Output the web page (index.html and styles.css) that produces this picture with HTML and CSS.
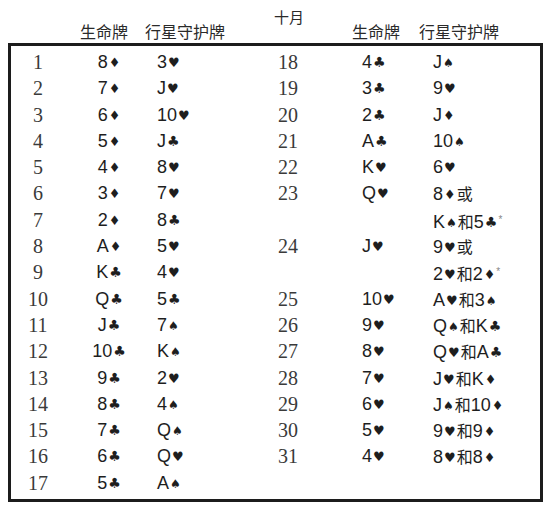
FILE: index.html
```html
<!DOCTYPE html>
<html lang="zh">
<head>
<meta charset="utf-8">
<title>十月</title>
<link rel="stylesheet" href="styles.css">
</head>
<body>
<div class="page">
  <div class="heads">
    <div></div>
    <div class="h h-life-l">生命牌</div>
    <div class="h h-planet-l">行星守护牌</div>
    <div class="h month">十月</div>
    <div class="h h-life-r">生命牌</div>
    <div class="h h-planet-r">行星守护牌</div>
  </div>
  <div class="box">
    <div class="n">1</div><div class="c cl">8<span class="s d">♦</span></div><div class="c pl">3<span class="s h2">♥</span></div>
    <div class="n nr">18</div><div class="c cr">4<span class="s cb">♣</span></div><div class="c pr">J<span class="s sp">♠</span></div>

    <div class="n">2</div><div class="c cl">7<span class="s d">♦</span></div><div class="c pl">J<span class="s h2">♥</span></div>
    <div class="n nr">19</div><div class="c cr">3<span class="s cb">♣</span></div><div class="c pr">9<span class="s h2">♥</span></div>

    <div class="n">3</div><div class="c cl">6<span class="s d">♦</span></div><div class="c pl">10<span class="s h2">♥</span></div>
    <div class="n nr">20</div><div class="c cr">2<span class="s cb">♣</span></div><div class="c pr">J<span class="s d">♦</span></div>

    <div class="n">4</div><div class="c cl">5<span class="s d">♦</span></div><div class="c pl">J<span class="s cb">♣</span></div>
    <div class="n nr">21</div><div class="c cr">A<span class="s cb">♣</span></div><div class="c pr">10<span class="s sp">♠</span></div>

    <div class="n">5</div><div class="c cl">4<span class="s d">♦</span></div><div class="c pl">8<span class="s h2">♥</span></div>
    <div class="n nr">22</div><div class="c cr">K<span class="s h2">♥</span></div><div class="c pr">6<span class="s h2">♥</span></div>

    <div class="n">6</div><div class="c cl">3<span class="s d">♦</span></div><div class="c pl">7<span class="s h2">♥</span></div>
    <div class="n nr">23</div><div class="c cr">Q<span class="s h2">♥</span></div><div class="c pr">8<span class="s d">♦</span><span class="cjk">或</span></div>

    <div class="n">7</div><div class="c cl">2<span class="s d">♦</span></div><div class="c pl">8<span class="s cb">♣</span></div>
    <div class="n nr"></div><div class="c cr"></div><div class="c pr">K<span class="s sp">♠</span><span class="cjk">和</span>5<span class="s cb">♣</span><span class="ast">*</span></div>

    <div class="n">8</div><div class="c cl">A<span class="s d">♦</span></div><div class="c pl">5<span class="s h2">♥</span></div>
    <div class="n nr">24</div><div class="c cr">J<span class="s h2">♥</span></div><div class="c pr">9<span class="s h2">♥</span><span class="cjk">或</span></div>

    <div class="n">9</div><div class="c cl">K<span class="s cb">♣</span></div><div class="c pl">4<span class="s h2">♥</span></div>
    <div class="n nr"></div><div class="c cr"></div><div class="c pr">2<span class="s h2">♥</span><span class="cjk">和</span>2<span class="s d">♦</span><span class="ast">*</span></div>

    <div class="n">10</div><div class="c cl">Q<span class="s cb">♣</span></div><div class="c pl">5<span class="s cb">♣</span></div>
    <div class="n nr">25</div><div class="c cr">10<span class="s h2">♥</span></div><div class="c pr">A<span class="s h2">♥</span><span class="cjk">和</span>3<span class="s sp">♠</span></div>

    <div class="n">11</div><div class="c cl">J<span class="s cb">♣</span></div><div class="c pl">7<span class="s sp">♠</span></div>
    <div class="n nr">26</div><div class="c cr">9<span class="s h2">♥</span></div><div class="c pr">Q<span class="s sp">♠</span><span class="cjk">和</span>K<span class="s cb">♣</span></div>

    <div class="n">12</div><div class="c cl">10<span class="s cb">♣</span></div><div class="c pl">K<span class="s sp">♠</span></div>
    <div class="n nr">27</div><div class="c cr">8<span class="s h2">♥</span></div><div class="c pr">Q<span class="s h2">♥</span><span class="cjk">和</span>A<span class="s cb">♣</span></div>

    <div class="n">13</div><div class="c cl">9<span class="s cb">♣</span></div><div class="c pl">2<span class="s h2">♥</span></div>
    <div class="n nr">28</div><div class="c cr">7<span class="s h2">♥</span></div><div class="c pr">J<span class="s h2">♥</span><span class="cjk">和</span>K<span class="s d">♦</span></div>

    <div class="n">14</div><div class="c cl">8<span class="s cb">♣</span></div><div class="c pl">4<span class="s sp">♠</span></div>
    <div class="n nr">29</div><div class="c cr">6<span class="s h2">♥</span></div><div class="c pr">J<span class="s sp">♠</span><span class="cjk">和</span>10<span class="s d">♦</span></div>

    <div class="n">15</div><div class="c cl">7<span class="s cb">♣</span></div><div class="c pl">Q<span class="s sp">♠</span></div>
    <div class="n nr">30</div><div class="c cr">5<span class="s h2">♥</span></div><div class="c pr">9<span class="s h2">♥</span><span class="cjk">和</span>9<span class="s d">♦</span></div>

    <div class="n">16</div><div class="c cl">6<span class="s cb">♣</span></div><div class="c pl">Q<span class="s h2">♥</span></div>
    <div class="n nr">31</div><div class="c cr">4<span class="s h2">♥</span></div><div class="c pr">8<span class="s h2">♥</span><span class="cjk">和</span>8<span class="s d">♦</span></div>

    <div class="n">17</div><div class="c cl">5<span class="s cb">♣</span></div><div class="c pl">A<span class="s sp">♠</span></div>
    <div class="n nr"></div><div class="c cr"></div><div class="c pr"></div>
  </div>
</div>
</body>
</html>
```

FILE: styles.css
```css
html, body {
  margin: 0;
  padding: 0;
  background: #ffffff;
}

.page {
  width: 535px;
  padding-left: 8px;
  color: #222222;
}

.heads,
.box {
  display: grid;
  grid-template-columns: 54px 88px 119px 83px 75px 1fr;
}

.heads {
  height: 43px;
  padding: 0 3px;
  align-items: end;
}

.h {
  font-family: "Noto Sans CJK SC", "Noto Sans", sans-serif;
  font-size: 16px;
  line-height: 20px;
  padding-bottom: 2px;
  white-space: nowrap;
  color: #2a2a2a;
}

.h-life-l {
  padding-left: 15px;
}

.h-planet-l {
  margin-left: -8px;
}

.month {
  align-self: start;
  margin-top: 7px;
  padding-left: 2px;
  font-size: 15px;
}

.h-life-r {
  margin-left: -3px;
}

.h-planet-r {
  margin-left: -11px;
}

.box {
  border: 3px solid #1c1c1c;
  padding-top: 3px;
  height: 450px;
  box-sizing: content-box;
  grid-auto-rows: 26.3px;
  align-content: start;
  width: 529px;
}

.n {
  font-family: "Liberation Serif", "Times New Roman", serif;
  font-size: 20px;
  line-height: 26.3px;
  text-align: center;
  color: #3a3a3a;
}

.nr {
  text-align: left;
  padding-left: 6px;
}

.c {
  font-family: "Liberation Sans", Arial, sans-serif;
  font-size: 18px;
  line-height: 26.3px;
  white-space: nowrap;
  color: #1e1e1e;
}

.cl {
  text-align: center;
}

.pl {
  padding-left: 4px;
}

.cr {
  padding-left: 7px;
}

.pr {
  padding-left: 3px;
}

.s {
  font-family: "DejaVu Sans", sans-serif;
  font-size: 12px;
  margin-left: 1px;
  vertical-align: 1px;
}

.s.d {
  font-size: 13px;
}

.s.h2 {
  font-size: 13px;
}

.s.cb {
  font-size: 14px;
}

.s.sp {
  font-size: 12px;
}

.cjk {
  font-family: "Noto Sans CJK SC", sans-serif;
  font-size: 16px;
  margin-left: 1px;
}

.ast {
  font-family: "Liberation Sans", Arial, sans-serif;
  font-size: 10px;
  color: #888888;
  vertical-align: 5px;
  margin-left: 1px;
}
```
